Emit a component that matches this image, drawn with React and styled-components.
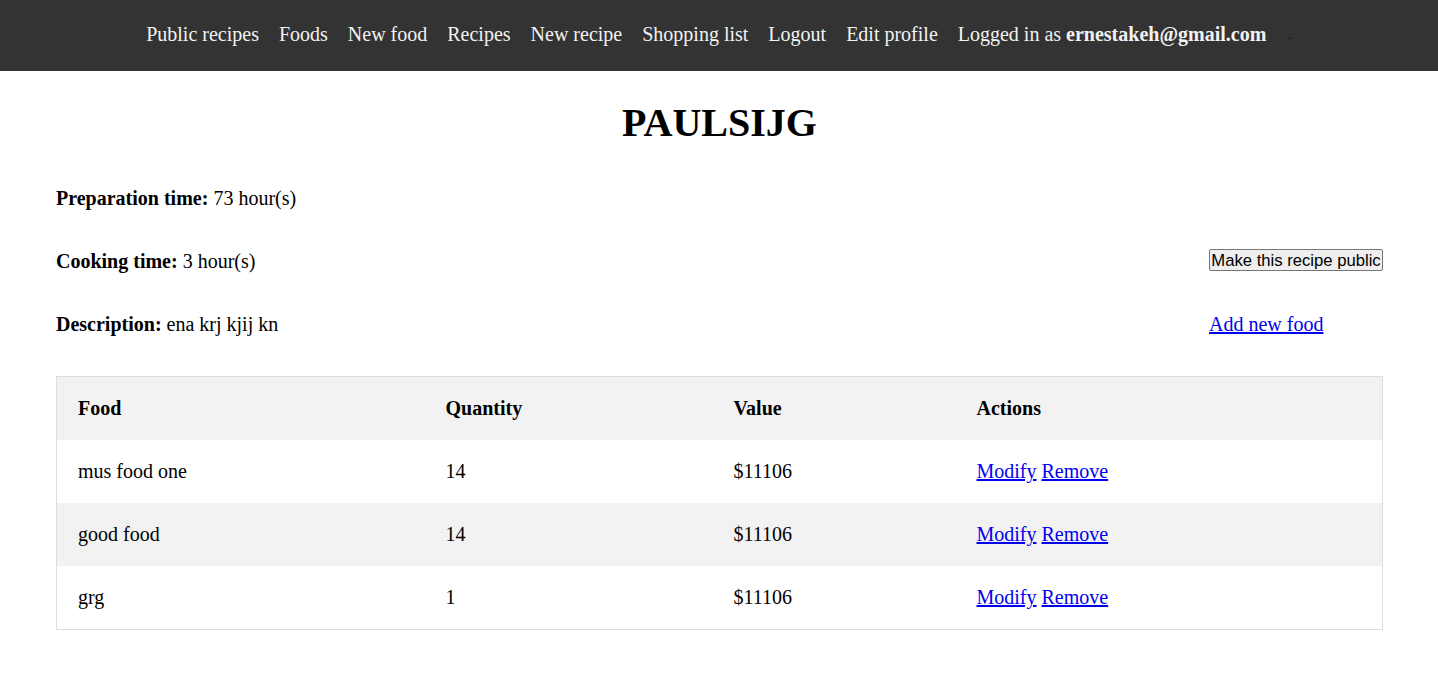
import styled, { createGlobalStyle } from 'styled-components';

const GlobalStyle = createGlobalStyle`
	body {
		margin: 0;
		font-family: "Liberation Serif", "Times New Roman", serif;
		font-size: 20px;
		color: #000;
		background: #fff;
	}
`;

const recipe = {
	name: 'PAULSIJG',
	preparation: 73,
	cooking: 3,
	description: 'ena krj kjij kn',
	foods: [
		{ name: 'mus food one', quantity: 14, value: 11106 },
		{ name: 'good food', quantity: 14, value: 11106 },
		{ name: 'grg', quantity: 1, value: 11106 },
	],
};

const navLinks = ['Public recipes', 'Foods', 'New food', 'Recipes', 'New recipe', 'Shopping list', 'Logout', 'Edit profile'];

const NavBar = styled.nav`
	height: 71px;
	box-sizing: border-box;
	padding-bottom: 2px;
	background: #333;
	display: flex;
	align-items: center;
	justify-content: center;
	gap: 20px;

	a {
		color: #f2f2f2;
		text-decoration: none;
	}

	.user {
		color: #f2f2f2;
	}

	.dot {
		color: #111;
		font-size: 14px;
		margin-left: 2px;
	}
`;

const Main = styled.main`
	margin: 0 55px 0 56px;
`;

const Title = styled.h1`
	font-size: 40px;
	text-align: center;
	margin: 28px 0 21px;
`;

const Details = styled.div`
	display: grid;
	grid-template-columns: 1fr 174px;
	grid-auto-rows: 63px;
	align-items: center;
	margin-bottom: 20px;

	p {
		margin: 0;
	}
`;

const ButtonCell = styled.div`
	align-self: start;
	padding-top: 19px;
`;

const PublicButton = styled.button`
	display: block;
	font-family: Arial, "Liberation Sans", sans-serif;
	font-size: 16.67px;
	padding: 1px 1px;
	height: 22px;
	width: 174px;
	border: 1px solid #767676;
	border-radius: 2px;
	background: #efefef;
	color: #000;
	white-space: nowrap;
`;

const TextLink = styled.a`
	color: #0000ee;
	text-decoration: underline;
	cursor: pointer;
`;

const Table = styled.table`
	width: 100%;
	border-collapse: collapse;
	border: 1px solid #ddd;

	th, td {
		text-align: left;
		padding: 20px 21px;
		line-height: 23px;
	}

	tr:nth-child(even) {
		background: #f2f2f2;
	}

	thead tr {
		background: #f2f2f2;
	}
`;

const Actions = styled.td`
	a + a {
		margin-left: 5px;
	}
`;

function App() {
	const { name, preparation, cooking, description, foods } = recipe;

	return (
		<>
			<GlobalStyle />
			<NavBar>
				{navLinks.map(link => (
					<a href='#' key={link}>{link}</a>
				))}
				<span className='user'>Logged in as <b>ernestakeh@gmail.com</b></span>
				<span className='dot'>.</span>
			</NavBar>
			<Main>
				<Title>{name}</Title>
				<Details>
					<p><b>Preparation time:</b> {preparation} hour(s)</p>
					<span></span>
					<p><b>Cooking time:</b> {cooking} hour(s)</p>
					<ButtonCell><PublicButton>Make this recipe public</PublicButton></ButtonCell>
					<p><b>Description:</b> {description}</p>
					<div><TextLink href='#'>Add new food</TextLink></div>
				</Details>
				<Table>
					<colgroup>
						<col style={{ width: 368 }} />
						<col style={{ width: 288 }} />
						<col style={{ width: 243 }} />
						<col />
					</colgroup>
					<thead>
						<tr>
							<th>Food</th>
							<th>Quantity</th>
							<th>Value</th>
							<th>Actions</th>
						</tr>
					</thead>
					<tbody>
						{foods.map(food => (
							<tr key={food.name}>
								<td>{food.name}</td>
								<td>{food.quantity}</td>
								<td>${food.value}</td>
								<Actions>
									<TextLink href='#'>Modify</TextLink>
									<TextLink href='#'>Remove</TextLink>
								</Actions>
							</tr>
						))}
					</tbody>
				</Table>
			</Main>
		</>
	)
}

export default App;
